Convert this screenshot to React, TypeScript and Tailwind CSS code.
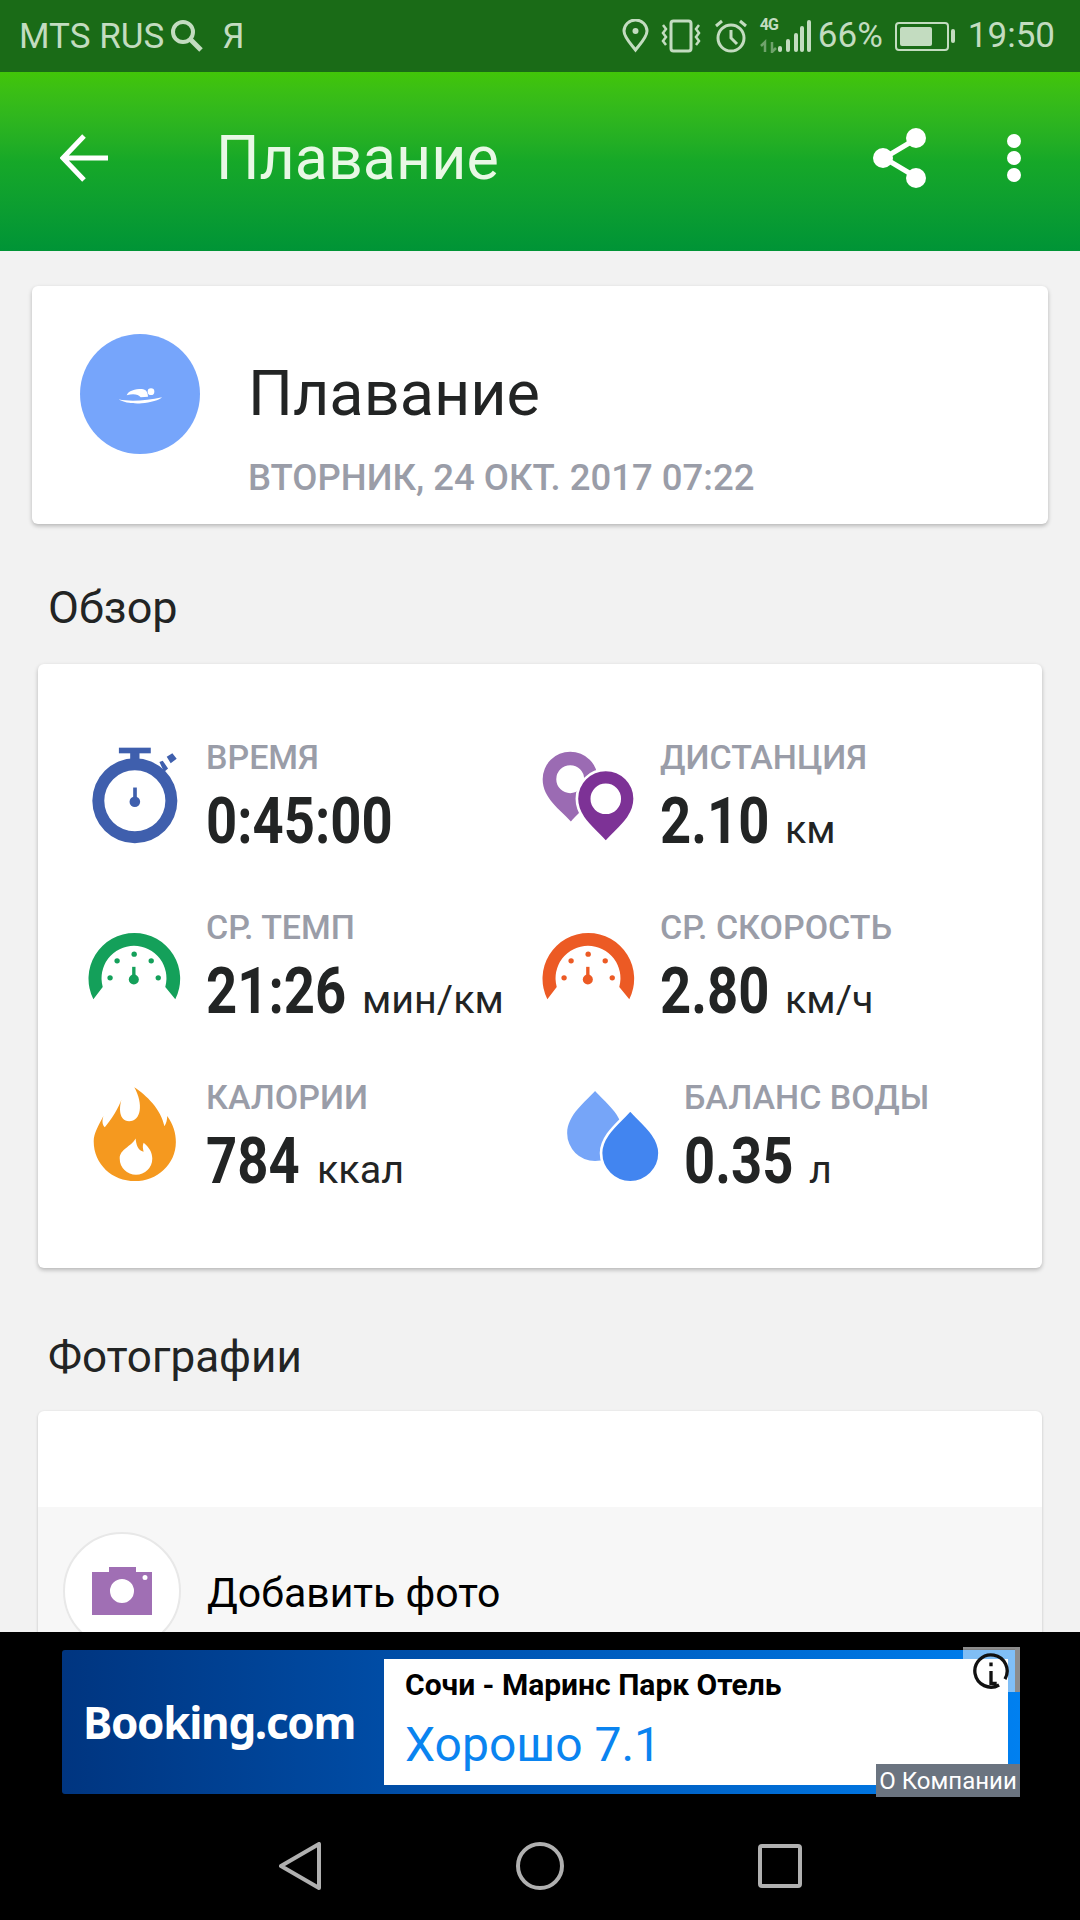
const FONT = "font-['Roboto','Noto_Sans',sans-serif]";

function Gauge({ color }: { color: string }) {
  return (
    <svg viewBox="78 630 290 215" className="w-[97px] h-[72px]" fill={color}>
      <path d="M100 837A137 137 0 1 1 345 837L315 800A97 97 0 1 0 128 800Z" />
      <circle cx="150" cy="773" r="8" />
      <circle cx="171" cy="722" r="8" />
      <circle cx="222" cy="702" r="8" />
      <circle cx="273" cy="722" r="8" />
      <circle cx="294" cy="773" r="8" />
      <rect x="216" y="740" width="10" height="36" />
      <circle cx="221" cy="778" r="15" />
    </svg>
  );
}

function Stopwatch() {
  return (
    <svg viewBox="90 80 265 295" className="w-[88px] h-[98px]" fill="#3f5fad">
      <rect x="174" y="85" width="96" height="17" />
      <rect x="208" y="100" width="28" height="30" />
      <path d="M318 112L335 102L348 118L330 132ZM296 128L306 124L322 148L310 158Z" />
      <path fillRule="evenodd" d="M222 117a128 128 0 1 0 0 256a128 128 0 1 0 0-256zM222 153a92 92 0 1 1 0 184a92 92 0 1 1 0-184z" />
      <rect x="217" y="205" width="11" height="40" />
      <circle cx="222" cy="248" r="16" />
    </svg>
  );
}

function Pins() {
  return (
    <svg viewBox="60 90 290 280" className="w-[97px] h-[93px]">
      <path fillRule="evenodd" fill="#9b6bb3" d="M152 305C120 270 67 235 67 178a83 83 0 0 1 166 0C233 235 184 270 152 305zM150 136a42 42 0 1 0 0 84a42 42 0 1 0 0-84z" />
      <path fillRule="evenodd" fill="#7d3296" stroke="#fff" strokeWidth="8" d="M257 368C225 330 170 295 170 237a87 87 0 0 1 174 0C344 295 289 330 257 368zM257 195a42 42 0 1 0 0 84a42 42 0 1 0 0-84z" />
      <circle cx="257" cy="237" r="42" fill="#fff" />
    </svg>
  );
}

function Flame() {
  return (
    <svg viewBox="0 0 300 300" className="w-[104px] h-[104px]">
      <path fill="#f5991f" d="M145 12C180 35 222 75 232 125C238 115 240 105 240 95C258 120 265 145 265 170C265 235 210 283 147 283C82 283 28 235 28 168C28 145 42 122 56 95C52 108 52 120 60 128C78 105 100 75 110 42C100 70 100 110 130 110C165 110 172 60 145 12Z" />
      <path fill="#fff" d="M149 160C150 175 155 195 172 198C170 190 168 180 172 172C188 185 197 200 197 218a47 47 0 0 1-94 0C103 190 135 185 149 160Z" />
    </svg>
  );
}

function Drops() {
  return (
    <svg viewBox="135 1110 282 280" className="w-[94px] h-[93px]">
      <path fill="#76a5f8" d="M222 1113C250 1145 306 1185 306 1240a84 84 0 0 1-168 0C138 1185 194 1145 222 1113Z" />
      <path fill="#4285f0" stroke="#fff" strokeWidth="8" d="M328 1170C358 1205 416 1245 416 1300a88 88 0 0 1-176 0C240 1245 298 1205 328 1170Z" />
    </svg>
  );
}

function Stat({
  icon,
  iconBox,
  label,
  value,
  valueBox,
  unit,
  className,
}: {
  icon: React.ReactNode;
  iconBox: string;
  label: string;
  value: string;
  valueBox: string;
  unit: string;
  className?: string;
}) {
  return (
    <div className={`flex items-start h-[170px] ${className ?? ""}`}>
      <div className={`shrink-0 ${iconBox}`}>{icon}</div>
      <div className="flex flex-col">
        <span className="text-[34px] leading-[40px] font-medium text-[#9a9da8] whitespace-nowrap">{label}</span>
        <div className="mt-[13px] flex items-baseline whitespace-nowrap text-[#222424]">
          <div className={valueBox}>
            <span className="inline-block origin-left scale-x-[0.85] text-[64px] leading-[64px] font-bold">{value}</span>
          </div>
          {unit ? <span className="text-[39.500px] leading-[64px] ml-[18px]">{unit}</span> : null}
        </div>
      </div>
    </div>
  );
}

function StatusIcons() {
  return (
    <div className="flex items-center text-[#c3dcc0]">
      <svg viewBox="0 0 27 34" className="w-[27px] h-[34px]" fill="none" stroke="currentColor" strokeWidth="3">
        <path d="M13.5 31C8 24 2 18 2 12a11.500 11 0 0 1 23 0C25 18 19 24 13.500 31Z" />
        <circle cx="13.5" cy="12" r="3" fill="currentColor" stroke="none" />
      </svg>
      <svg viewBox="0 0 42 34" className="w-[42px] h-[34px] ml-[11px]" fill="none" stroke="currentColor" strokeWidth="3">
        <rect x="11" y="2" width="20" height="30" rx="2.5" />
        <path d="M3 6l3 4-3 4 3 4-3 4 3 4M39 6l-3 4 3 4-3 4 3 4-3 4" strokeWidth="2.500" />
      </svg>
      <svg viewBox="0 0 34 34" className="w-[34px] h-[34px] ml-[12px]" fill="none" stroke="currentColor" strokeWidth="3">
        <circle cx="17" cy="19" r="13" />
        <path d="M17 11v8l6 6M2 7l6-5M32 7l-6-5" />
      </svg>
      <div className="relative w-[52px] h-[34px] ml-[12px]">
        <span className="absolute left-0 top-[-2px] text-[16px] leading-[16px] font-bold tracking-[-0.06em]">4G</span>
        <svg viewBox="0 0 52 34" className="absolute inset-0 w-[52px] h-[34px]" fill="currentColor">
          <path d="M5 33V23l-4 4M12 23v10l4-4" fill="none" stroke="currentColor" strokeOpacity="0.5" strokeWidth="2.500" />
          <rect x="18" y="27" width="4" height="6" rx="2" />
          <rect x="26" y="20" width="4" height="13" rx="2" />
          <rect x="34" y="14" width="4" height="19" rx="2" />
          <rect x="40" y="7" width="4" height="26" rx="2" />
          <rect x="47" y="1" width="4" height="32" rx="2" />
        </svg>
      </div>
      <span className="text-[35px] leading-[40px] ml-[6px]">66%</span>
      <div className="flex items-center ml-[12px]">
        <div className="w-[54px] h-[29px] rounded-[4px] border-2 border-[#c3dcc0] p-[3px]">
          <div className="w-[32px] h-full bg-[#c3dcc0] rounded-[2px]" />
        </div>
        <div className="w-[4px] h-[14px] ml-[2px] bg-[#c3dcc0] rounded-[2px]" />
      </div>
      <span className="text-[35px] leading-[40px] ml-[13px]">19:50</span>
    </div>
  );
}

export default function App() {
  return (
    <div className={`w-[1080px] h-[1920px] flex flex-col overflow-hidden bg-[#f2f2f2] ${FONT}`}>
      <div className="h-[72px] shrink-0 bg-[#1a6b17] flex items-center justify-between pl-[19px] pr-[25px] text-[#c3dcc0]">
        <div className="flex items-center">
          <span className="text-[35px] leading-[40px] mt-[2px] whitespace-nowrap">MTS RUS</span>
          <svg viewBox="0 0 34 34" className="w-[34px] h-[34px] ml-[6px]" fill="none" stroke="currentColor" strokeWidth="4">
            <circle cx="13" cy="13" r="10" />
            <path d="M20 20l11 11" strokeWidth="5" />
          </svg>
          <span className="text-[35px] leading-[40px] mt-[2px] ml-[18px]">Я</span>
        </div>
        <StatusIcons />
      </div>

      <header className="h-[179px] shrink-0 bg-gradient-to-b from-[#42c508] via-[#16a828] to-[#009436] flex items-center pl-[60px] pr-[58px] pb-[8px]">
        <svg viewBox="0 0 48 48" className="w-[48px] h-[48px] shrink-0" fill="none" stroke="#fff" strokeWidth="5">
          <path d="M48 24H4M24 2L3 24l21 22" />
        </svg>
        <span className="ml-[108px] text-[61px] leading-[64px] text-[#e8f8e5] flex-1">Плавание</span>
        <svg viewBox="0 0 54 60" className="w-[54px] h-[60px] mr-[79px]" fill="#fff">
          <path d="M43 11L11 30l32 19" fill="none" stroke="#fff" strokeWidth="5" />
          <circle cx="43" cy="10" r="10" />
          <circle cx="10" cy="30" r="10" />
          <circle cx="43" cy="50" r="10" />
        </svg>
        <svg viewBox="0 0 16 48" className="w-[16px] h-[48px]" fill="#fff">
          <circle cx="8" cy="7" r="7" />
          <circle cx="8" cy="24" r="7" />
          <circle cx="8" cy="41" r="7" />
        </svg>
      </header>

      <main className="flex-1 min-h-0 overflow-hidden">
        <section className="mt-[35px] mx-[32px] h-[238px] bg-white rounded-[6px] shadow-[0_2px_4px_rgba(0,0,0,0.25)] flex pl-[48px] pt-[48px]">
          <div className="w-[120px] h-[120px] rounded-full bg-[#76a5fb] flex items-center justify-center shrink-0">
            <svg viewBox="0 0 180 120" className="w-[60px] h-[40px]" fill="#fff">
              <circle cx="123" cy="53" r="10" />
              <path d="M50 64C55 50 75 45 95 45C108 45 114 56 114 68L92 70C85 62 72 58 50 64Z" />
              <path d="M26 76C60 84 110 80 156 70C150 78 120 86 95 88C70 90 40 86 26 76Z" />
            </svg>
          </div>
          <div className="ml-[48px] flex flex-col">
            <span className="text-[63px] leading-[72px] mt-[24px] text-[#222424]">Плавание</span>
            <span className="text-[36.500px] leading-[40px] mt-[28px] font-medium text-[#9a9da8] whitespace-nowrap">
              ВТОРНИК, 24 ОКТ. 2017 07:22
            </span>
          </div>
        </section>

        <h2 className="mt-[60px] ml-[48px] text-[45px] leading-[48px] text-[#222424]">Обзор</h2>

        <section className="mt-[32px] mx-[38px] h-[604px] bg-white rounded-[6px] shadow-[0_2px_4px_rgba(0,0,0,0.25)] pt-[73px]">
          <div className="grid grid-cols-[453px_1fr]">
            <Stat icon={<Stopwatch />} iconBox="w-[168px] pl-[53px] pt-[9px]" label="ВРЕМЯ" value="0:45:00" valueBox="w-[185px]" unit="" />
            <Stat icon={<Pins />} iconBox="w-[169px] pl-[49px] pt-[13px]" label="ДИСТАНЦИЯ" value="2.10" valueBox="w-[107px]" unit="км" />
            <Stat icon={<Gauge color="#14a05a" />} iconBox="w-[168px] pl-[48px] pt-[23px]" label="СР. ТЕМП" value="21:26" valueBox="w-[138px]" unit="мин/км" />
            <Stat icon={<Gauge color="#ec5a24" />} iconBox="w-[169px] pl-[49px] pt-[23px]" label="СР. СКОРОСТЬ" value="2.80" valueBox="w-[107px]" unit="км/ч" />
            <Stat icon={<Flame />} iconBox="w-[168px] pl-[46px] pt-[6px]" label="КАЛОРИИ" value="784" valueBox="w-[93px]" unit="ккал" />
            <Stat icon={<Drops />} iconBox="w-[118px] pt-[13px]" label="БАЛАНС ВОДЫ" value="0.35" valueBox="w-[107px]" unit="л" className="ml-[75px]" />
          </div>
        </section>

        <h2 className="mt-[65px] ml-[48px] text-[44px] leading-[48px] text-[#222424]">Фотографии</h2>

        <section className="mt-[30px] mx-[38px] h-[400px] bg-white rounded-[6px] shadow-[0_1px_3px_rgba(0,0,0,0.2)] overflow-hidden">
          <div className="h-[96px]" />
          <div className="h-[304px] bg-[#f7f7f7] pl-[25px] pt-[25px] flex items-start">
            <div className="w-[118px] h-[118px] rounded-full bg-white border-2 border-[#e8e8e8] flex items-center justify-center shrink-0">
              <svg viewBox="0 0 60 48" className="w-[60px] h-[48px]" fill="#a06fb4">
                <path fillRule="evenodd" d="M0 5h17V0h27v5h16v43H0zM30 12a12 12 0 1 0 0 24a12 12 0 1 0 0-24zM53 8a2.500 2.500 0 1 0 0 5a2.500 2.500 0 1 0 0-5z" />
              </svg>
            </div>
            <span className="ml-[26px] mt-[37px] text-[41px] leading-[48px] text-black whitespace-nowrap">Добавить фото</span>
          </div>
        </section>
      </main>

      <footer className="h-[288px] shrink-0 bg-black flex flex-col">
        <div className="relative mt-[18px] ml-[62px] w-[958px] h-[144px] bg-gradient-to-r from-[#003580] via-[#0058b8] to-[#0080f0] rounded-[3px] flex items-center pr-[12px]">
          <span className="w-[322px] pl-[21px] text-[44px] leading-[52px] font-bold text-white tracking-[-0.03em] font-['Noto_Sans',sans-serif]">Booking.com</span>
          <div className="h-[126px] flex-1 bg-white pl-[21px] pt-[8px] flex flex-col">
            <span className="text-[30px] leading-[36px] font-bold text-black whitespace-nowrap">Сочи - Маринс Парк Отель</span>
            <span className="mt-[14px] text-[48px] leading-[56px] text-[#0a84f0] whitespace-nowrap">Хорошо 7.1</span>
          </div>
          <div className="absolute right-0 top-[-3px] w-[57px] h-[45px] bg-white/50 border-t-2 border-r-[5px] border-[#8c8c8c] flex items-center justify-center pl-[4px]">
            <svg viewBox="0 0 40 40" className="w-[38px] h-[38px]" fill="none" stroke="#111" strokeWidth="3.500">
              <path d="M28.5 34.700A17 17 0 1 1 34.700 28.500" />
              <path d="M20 20V33h6M20 11v4" />
            </svg>
          </div>
          <div className="absolute right-0 bottom-[-3px] w-[144px] h-[33px] bg-[#6b7480] flex items-center justify-center">
            <span className="text-[24px] leading-[30px] text-white whitespace-nowrap">О Компании</span>
          </div>
        </div>
        <nav className="mt-[48px] flex items-start pl-[279px]">
          <svg viewBox="0 0 42 48" className="w-[42px] h-[48px]" fill="none" stroke="#b0b0b0" strokeWidth="4" strokeLinejoin="round">
            <path d="M40 2V46L2 24Z" />
          </svg>
          <svg viewBox="0 0 48 48" className="w-[48px] h-[48px] ml-[195px]" fill="none" stroke="#b0b0b0" strokeWidth="4">
            <circle cx="24" cy="24" r="22" />
          </svg>
          <svg viewBox="0 0 44 44" className="w-[44px] h-[44px] ml-[194px] mt-[2px]" fill="none" stroke="#b0b0b0" strokeWidth="4" strokeLinejoin="round">
            <rect x="2" y="2" width="40" height="40" rx="2" />
          </svg>
        </nav>
      </footer>
    </div>
  );
}
